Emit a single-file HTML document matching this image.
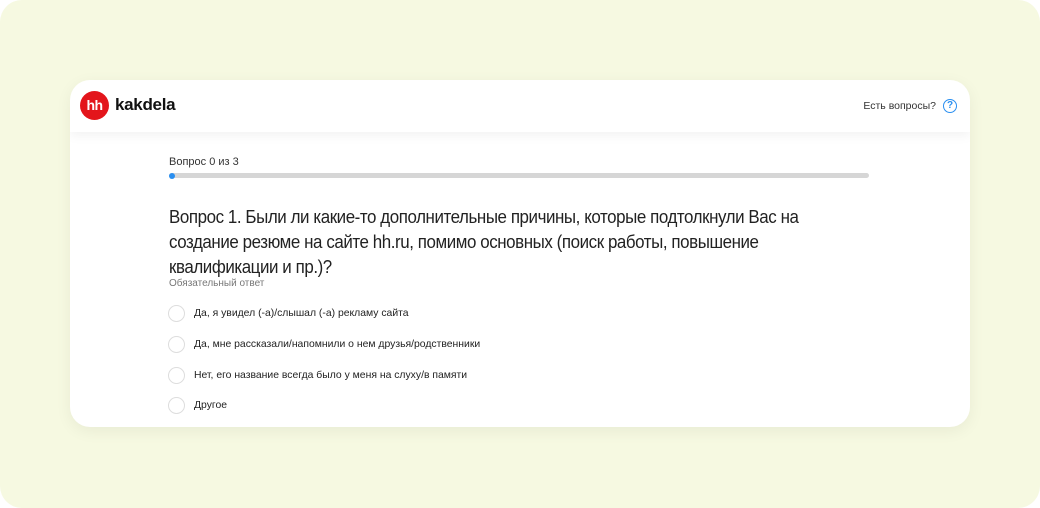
<!DOCTYPE html>
<html><head><meta charset="utf-8"><style>
html,body{margin:0;padding:0;background:#fff;}
body{width:1040px;height:508px;position:relative;overflow:hidden;font-family:"Liberation Sans",sans-serif;}
.bg{position:absolute;left:0;top:0;width:1040px;height:508px;background:#f6f9e1;border-radius:22px;}
.card{position:absolute;left:70px;top:80px;width:900px;height:347px;background:#fff;border-radius:20px;box-shadow:0 4px 16px rgba(0,0,0,0.06);overflow:hidden;}
.hdr{position:absolute;left:0;top:0;width:900px;height:52px;box-shadow:0 4px 10px rgba(0,0,0,0.05);}
.logo{position:absolute;left:10px;top:11px;width:29px;height:29px;border-radius:50%;background:#e3151b;color:#fff;font-weight:bold;font-size:14px;line-height:29px;text-align:center;letter-spacing:-0.5px;}
.brand{position:absolute;left:45px;top:15px;font-size:17px;font-weight:bold;color:#111;letter-spacing:-0.3px;}
.ask{position:absolute;right:34px;top:20px;font-size:10.5px;color:#333;}
.q{position:absolute;right:13px;top:19px;width:12px;height:12px;border:1.5px solid #2a8ff0;border-radius:50%;color:#2a8ff0;font-size:10px;line-height:12px;text-align:center;font-weight:bold;}
.prog{position:absolute;left:99px;top:76px;font-size:11px;color:#333;}
.bar{position:absolute;left:99px;top:93px;width:700px;height:5px;border-radius:3px;background:#d6d6d6;}
.dot{position:absolute;left:0;top:-0.5px;width:6px;height:6px;border-radius:50%;background:#2a8ff0;}
.title{position:absolute;left:99px;top:125px;width:760px;font-size:18px;line-height:25px;color:#222;letter-spacing:-0.45px;transform:scaleX(0.94);transform-origin:0 0;white-space:nowrap;}
.req{position:absolute;left:99px;top:198px;font-size:10px;color:#777;}
.opt{position:absolute;left:98px;font-size:10.4px;color:#222;}
.opt i{position:absolute;left:0;top:-3px;width:15px;height:15px;border:1px solid #ddd;border-radius:50%;}
.opt span{position:absolute;left:26px;top:0;white-space:nowrap;}
</style></head><body>
<div class="bg"></div>
<div class="card">
 <div class="hdr">
  <div class="logo">hh</div><div class="brand">kakdela</div>
  <div class="ask">Есть вопросы?</div><div class="q">?</div>
 </div>
 <div class="prog">Вопрос 0 из 3</div>
 <div class="bar"><div class="dot"></div></div>
 <div class="title">Вопрос 1. Были ли какие-то дополнительные причины, которые подтолкнули Вас на<br>создание резюме на сайте hh.ru, помимо основных (поиск работы, повышение<br>квалификации и пр.)?</div>
 <div class="req">Обязательный ответ</div>
 <div class="opt" style="top:228px"><i></i><span>Да, я увидел (-а)/слышал (-а) рекламу сайта</span></div>
 <div class="opt" style="top:259px"><i></i><span>Да, мне рассказали/напомнили о нем друзья/родственники</span></div>
 <div class="opt" style="top:290px"><i></i><span>Нет, его название всегда было у меня на слуху/в памяти</span></div>
 <div class="opt" style="top:320px"><i></i><span>Другое</span></div>
</div>
</body></html>
